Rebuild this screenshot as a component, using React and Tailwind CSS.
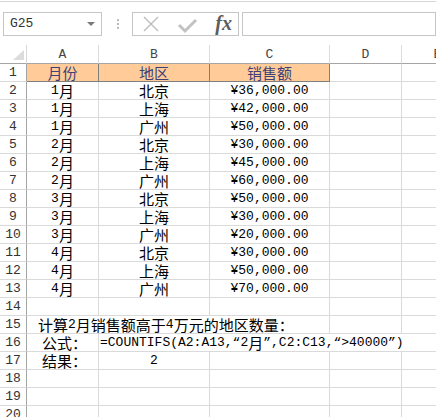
import React from 'react';

const cjk = /([\u3000-\u303f\u4e00-\u9fff\uff00-\uffef]+)/;

// split mixed text so CJK runs get the wider CJK face
const Txt = ({ s }) =>
    s.split(cjk).map((p, i) =>
        i % 2 ? (
            <span key={i} className="text-[15px] leading-none font-['Noto_Sans_CJK_SC',sans-serif]">{p}</span>
        ) : (
            <React.Fragment key={i}>{p}</React.Fragment>
        )
    );

const data = [
    ['1月', '北京', '¥36,000.00'],
    ['1月', '上海', '¥42,000.00'],
    ['1月', '广州', '¥50,000.00'],
    ['2月', '北京', '¥30,000.00'],
    ['2月', '上海', '¥45,000.00'],
    ['2月', '广州', '¥60,000.00'],
    ['3月', '北京', '¥50,000.00'],
    ['3月', '上海', '¥30,000.00'],
    ['3月', '广州', '¥20,000.00'],
    ['4月', '北京', '¥30,000.00'],
    ['4月', '上海', '¥50,000.00'],
    ['4月', '广州', '¥70,000.00'],
];

const RowHead = ({ n }) => (
    <div className="h-[18px] border-r border-b border-r-[#a5a5a5] border-b-[#d9d9d9] flex items-center justify-center text-[#333] leading-none">
        {n}
    </div>
);

const Cell = ({ children, className = '' }) => (
    <div className={`h-[18px] border-r border-b border-[#dadada] flex items-center justify-center whitespace-nowrap leading-none ${className}`}>
        {children}
    </div>
);

const App = () => {
    return (
        <div className="w-[436px] h-[417px] overflow-hidden bg-white font-['Liberation_Mono','Noto_Sans_CJK_SC',monospace] text-[13px] text-black">
            {/* toolbar */}
            <div className="h-[45px] pt-px">
                <div className="h-[44px] border-t border-[#d6d6d6] flex items-start pt-[10px] pl-[3px]">
                    <div className="w-[102px] h-[24px] border border-[#c6c6c6] flex items-center pl-[6px] pr-[6px] text-[#333]">
                        <span className="flex-1">G25</span>
                        <svg width="8" height="5" viewBox="0 0 8 5">
                            <path d="M0 0 H8 L4 4 Z" fill="#7a7a7a" />
                        </svg>
                    </div>
                    <svg width="4" height="24" viewBox="0 0 4 24" className="ml-[14px]">
                        <rect x="1" y="7" width="2" height="2" fill="#b5b5b5" />
                        <rect x="1" y="11" width="2" height="2" fill="#b5b5b5" />
                        <rect x="1" y="15" width="2" height="2" fill="#b5b5b5" />
                    </svg>
                    <div className="ml-[12px] w-[110px] h-[24px] border border-[#c6c6c6] flex items-center">
                        <svg width="82" height="22" viewBox="0 0 82 22">
                            <path d="M11 4 L25 18 M25 4 L11 18" stroke="#bcbcbc" strokeWidth="1.4" fill="none" />
                            <path d="M46 12 L52 18 L63 7" stroke="#c2c2c2" strokeWidth="3" fill="none" />
                        </svg>
                        <span className="font-['Liberation_Serif',serif] italic font-bold text-[20px] text-[#5c5c5c] leading-none -mt-[2px]">
                            fx
                        </span>
                    </div>
                    <div className="ml-[3px] w-[200px] h-[24px] border border-[#c6c6c6]" />
                </div>
            </div>

            {/* sheet */}
            <div className="grid grid-cols-[27px_72px_111px_120px_72px_72px] w-[474px]">
                {/* column headers */}
                <div className="h-[19px] border-r border-b border-r-[#d9d9d9] border-b-[#a5a5a5] relative">
                    <svg width="11" height="10" viewBox="0 0 11 10" className="absolute left-[13px] top-[5px]">
                        <path d="M11 0 V10 H0 Z" fill="#dcdcdc" />
                    </svg>
                </div>
                {['A', 'B', 'C', 'D', 'E'].map((c) => (
                    <div key={c} className="h-[19px] border-r border-b border-r-[#dcdcdc] border-b-[#a5a5a5] flex items-center justify-center text-[#444] leading-none">
                        {c}
                    </div>
                ))}

                {/* row 1 */}
                <RowHead n={1} />
                {['月份', '地区', '销售额'].map((h) => (
                    <div key={h} className="h-[18px] border-r border-b border-[#7f7f7f] bg-[#ffcc99] text-[#3f3f76] flex items-center justify-center leading-none">
                        <Txt s={h} />
                    </div>
                ))}
                <Cell />
                <Cell />

                {data.map((r, i) => (
                    <React.Fragment key={i}>
                        <RowHead n={i + 2} />
                        <Cell><Txt s={r[0]} /></Cell>
                        <Cell><Txt s={r[1]} /></Cell>
                        <Cell>{r[2]}</Cell>
                        <Cell />
                        <Cell />
                    </React.Fragment>
                ))}

                {/* row 14 */}
                <RowHead n={14} />
                <Cell /><Cell /><Cell /><Cell /><Cell />

                {/* row 15 */}
                <RowHead n={15} />
                <Cell className="col-span-3 !justify-start pl-[11px]">
                    <Txt s="计算2月销售额高于4万元的地区数量：" />
                </Cell>
                <Cell /><Cell />

                {/* row 16 */}
                <RowHead n={16} />
                <Cell className="!justify-start pl-[15px]"><Txt s="公式：" /></Cell>
                <Cell className="col-span-4 !justify-start pl-[1px]">
                    <Txt s="=COUNTIFS(A2:A13,“2月”,C2:C13,“>40000”)" />
                </Cell>

                {/* row 17 */}
                <RowHead n={17} />
                <Cell className="!justify-start pl-[15px]"><Txt s="结果：" /></Cell>
                <Cell>2</Cell>
                <Cell /><Cell /><Cell />

                {[18, 19, 20].map((n) => (
                    <React.Fragment key={n}>
                        <RowHead n={n} />
                        <Cell /><Cell /><Cell /><Cell /><Cell />
                    </React.Fragment>
                ))}
            </div>
        </div>
    );
};

export default App;
